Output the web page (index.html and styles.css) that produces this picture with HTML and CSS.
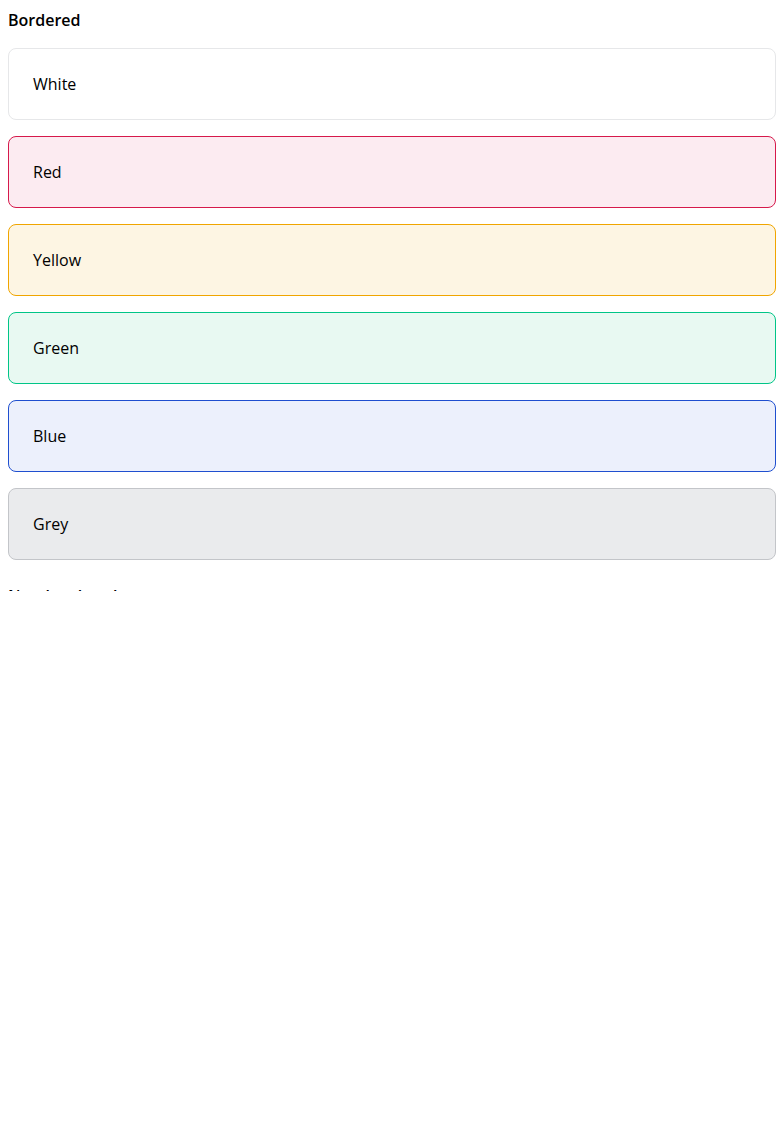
FILE: index.html
```html
<!DOCTYPE html>
<html lang="en">
<head>
<meta charset="utf-8">
<title>Cards</title>
<link rel="stylesheet" href="styles.css">
</head>
<body>
<div class="page">
  <section class="group">
    <h2 class="group-title">Bordered</h2>
    <div class="card-list">
      <div class="card card-white bordered">White</div>
      <div class="card card-red bordered">Red</div>
      <div class="card card-yellow bordered">Yellow</div>
      <div class="card card-green bordered">Green</div>
      <div class="card card-blue bordered">Blue</div>
      <div class="card card-grey bordered">Grey</div>
    </div>
  </section>
  <section class="group">
    <h2 class="group-title">Non-bordered</h2>
  </section>
</div>
</body>
</html>
```
FILE: styles.css
```css
html, body {
  margin: 0;
  padding: 0;
  background: #ffffff;
}

.page {
  box-sizing: border-box;
  height: 591px;
  overflow: hidden;
  padding: 8px;
  font-family: "Open Sans", "Liberation Sans", sans-serif;
  color: #000000;
  display: flex;
  flex-direction: column;
  gap: 24px;
}

.group {
  display: flex;
  flex-direction: column;
  gap: 16px;
}

.group-title {
  margin: 0;
  font-size: 16px;
  line-height: 24px;
  font-weight: 600;
  color: #000000;
}

.card-list {
  display: flex;
  flex-direction: column;
  gap: 16px;
}

.card {
  box-sizing: border-box;
  height: 72px;
  display: flex;
  align-items: center;
  padding: 0 24px;
  border: 1px solid transparent;
  border-radius: 8px;
  font-size: 16px;
  line-height: 24px;
  color: #000000;
}

.card-white { background: #ffffff; }
.card-white.bordered { border-color: #e6e7e9; }

.card-red { background: #fcebf1; }
.card-red.bordered { border-color: #d6194b; }

.card-yellow { background: #fdf5e3; }
.card-yellow.bordered { border-color: #f0a500; }

.card-green { background: #e8f9f2; }
.card-green.bordered { border-color: #00c587; }

.card-blue { background: #ecf0fc; }
.card-blue.bordered { border-color: #1f4fcf; }

.card-grey { background: #eaebed; }
.card-grey.bordered { border-color: #c3c5c9; }
```
